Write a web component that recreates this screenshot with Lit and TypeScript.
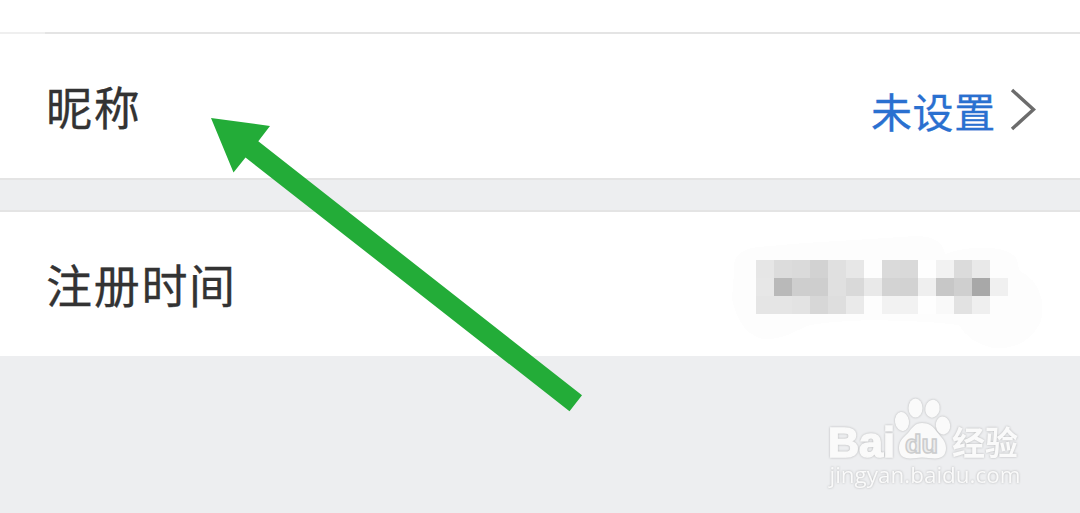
import { css, html, LitElement, svg } from 'lit';
import { customElement, property } from 'lit/decorators.js';

const CELL = 18;

// Grey levels of the pixelated date, row by row
const MOSAIC = [
  [230, 220, 218, 210, 224, 231, 253, 218, 217, 254, 242, 219, 233, 253],
  [231, 185, 206, 206, 224, 217, 233, 211, 210, 239, 199, 207, 168, 240],
  [229, 229, 227, 215, 222, 234, 253, 242, 242, 254, 249, 226, 239, 253],
];

@customElement('mosaic-value')
export class MosaicValue extends LitElement {
  static override styles = css`
    :host {
      display: block;
    }
    svg {
      display: block;
    }
    .smudge {
      fill: #fdfdfd;
    }
  `;

  override render() {
    return html`
      <svg width="320" height="117" viewBox="0 0 320 117" shape-rendering="crispEdges">
        <path
          class="smudge"
          d="M4 38C2 22 10 14 28 12L75 8L140 4L185 1C204 1 213 7 215 19C240 10 274 10 286 22C289 28 286 36 295 39C311 49 315 69 311 86C302 107 283 115 262 113C246 109 235 101 229 90C200 86 170 86 140 85L103 87L80 90C62 97 54 105 32 104C12 98 6 80 2 64Z"
        />
        ${MOSAIC.map((row, y) =>
          row.map(
            (level, x) => svg`<rect
              x=${26 + x * CELL}
              y=${25 + y * CELL}
              width=${CELL}
              height=${CELL}
              fill="rgb(${level},${level},${level})"
            />`
          )
        )}
      </svg>
    `;
  }
}

@customElement('setting-row')
export class SettingRow extends LitElement {
  static override styles = css`
    :host {
      display: flex;
      justify-content: space-between;
      align-items: center;
      box-sizing: border-box;
      padding-left: 46px;
      background: #fff;
    }
    .label {
      padding-bottom: 3px;
      color: #333;
      font-size: 46px;
      line-height: 70px;
      letter-spacing: 1.7px;
      white-space: nowrap;
      -webkit-text-stroke: 0.3px #333;
    }
  `;

  @property()
  label = '';

  override render() {
    return html`
      <span class="label">${this.label}</span>
      <slot></slot>
    `;
  }
}

@customElement('baidu-watermark')
export class BaiduWatermark extends LitElement {
  static override styles = css`
    :host {
      display: block;
    }
    svg {
      display: block;
    }
    .mark {
      fill: #fafafa;
      filter: drop-shadow(0 0 1px #b4b5b6);
    }
    .latin {
      font-family: 'Liberation Sans', Arial, sans-serif;
      font-weight: bold;
    }
    .bai {
      stroke: #fafafa;
      stroke-width: 1.6px;
    }
    .cjk {
      font-family: 'Noto Sans CJK SC', sans-serif;
      font-weight: 700;
    }
    .url {
      font-family: 'Open Sans', sans-serif;
    }
    .du {
      fill: #ececed;
      stroke: #cbcccd;
      stroke-width: 1.5px;
    }
  `;

  override render() {
    return html`
      <svg width="220" height="110" viewBox="0 0 220 110">
        <text class="mark latin bai" x="13" y="66.500" font-size="42" textLength="67" lengthAdjust="spacingAndGlyphs">Bai</text>
        <g class="mark">
          <ellipse cx="87" cy="31.5" rx="7" ry="9.5" transform="rotate(-8 87 31.5)" />
          <ellipse cx="100.5" cy="18" rx="7" ry="9.5" />
          <ellipse cx="117.5" cy="18.7" rx="7.2" ry="9" transform="rotate(10 117.5 18.7)" />
          <ellipse cx="128" cy="35.5" rx="7.2" ry="9" transform="rotate(-8 128 35.5)" />
          <path
            d="M107 33C100 33 97 38 93 43C88 48 84 51 84 58C84 65 88 68.500 95 68.500C100 68.500 103 67.500 107 67.500C112 67.500 115 68.500 120 68.500C127 68.500 131 65 131 58C131 51 126 47 122 42C118 36 114 33 107 33Z"
          />
        </g>
        <text class="du latin" x="90" y="63" font-size="26" textLength="33" lengthAdjust="spacingAndGlyphs">du</text>
        <text class="mark cjk" x="137" y="64.500" font-size="33" textLength="66">经验</text>
        <text class="mark url" x="14.500" y="93" font-size="21.500" textLength="191" lengthAdjust="spacingAndGlyphs">jingyan.baidu.com</text>
      </svg>
    `;
  }
}

@customElement('app-root')
export class AppRoot extends LitElement {
  static override styles = css`
    :host {
      display: flex;
      flex-direction: column;
      position: relative;
      width: 1080px;
      height: 513px;
      overflow: hidden;
      background: #edeef0;
      font-family: 'Noto Sans CJK SC', sans-serif;
    }
    .previous {
      height: 32px;
      background: #fff;
    }
    .divider {
      height: 2px;
      flex: none;
      background: linear-gradient(to right, #efefef 45px, #e4e4e4 45px);
    }
    .nickname {
      height: 144px;
    }
    .gap {
      box-sizing: border-box;
      height: 34px;
      border-top: 2px solid #e4e4e4;
      border-bottom: 2px solid #e4e4e4;
    }
    .registered {
      height: 144px;
    }
    .value {
      display: flex;
      align-items: center;
      gap: 14px;
      padding: 7px 44px 0 0;
      color: #2a70d0;
      font-size: 41px;
      line-height: 60px;
      letter-spacing: 0.7px;
      -webkit-text-stroke: 0.3px #2a70d0;
    }
    .chevron {
      display: block;
      fill: none;
      stroke: #6c6c6c;
      stroke-width: 3.4px;
    }
    .date {
      padding: 19px 30px 0 0;
    }
    .arrow {
      position: absolute;
      inset: 0;
      fill: #23ac38;
    }
    .watermark {
      position: absolute;
      left: 815px;
      top: 390px;
    }
  `;

  override render() {
    return html`
      <div class="previous"></div>
      <div class="divider"></div>
      <setting-row class="nickname" label="昵称">
        <div class="value">
          <span>未设置</span>
          <svg class="chevron" width="26" height="44" viewBox="0 0 26 44">
            <path d="M2 2L23.500 21.500L2 41" />
          </svg>
        </div>
      </setting-row>
      <div class="gap"></div>
      <setting-row class="registered" label="注册时间">
        <mosaic-value class="date"></mosaic-value>
      </setting-row>
      <baidu-watermark class="watermark"></baidu-watermark>
      <svg class="arrow" width="1080" height="513" viewBox="0 0 1080 513">
        <path d="M211 118L270 126L258.300 141.300L582 395.300L569.500 411.300L245.500 157.500L233.500 172.500Z" />
      </svg>
    `;
  }
}

declare global {
  interface HTMLElementTagNameMap {
    'app-root': AppRoot;
    'baidu-watermark': BaiduWatermark;
    'mosaic-value': MosaicValue;
    'setting-row': SettingRow;
  }
}
